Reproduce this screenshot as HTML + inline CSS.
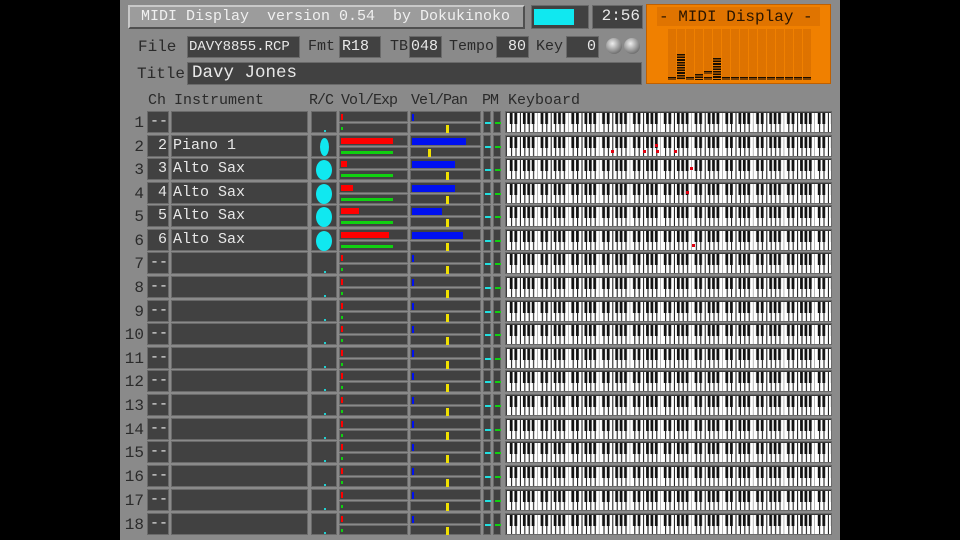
<!DOCTYPE html>
<html><head><meta charset="utf-8"><style>
*{margin:0;padding:0;box-sizing:border-box}
body{width:960px;height:540px;background:#000;position:relative;overflow:hidden;font-family:"Liberation Mono",monospace;font-size:15px}
#m{position:absolute;left:120px;top:0;width:720px;height:540px;background:#8a8a8a}
.a{position:absolute}
.b{position:absolute;background:#414141;border:1px solid #6a6a6a;color:#e8e8e8;line-height:20px;white-space:pre}
.l{position:absolute;color:#2a2a2a;white-space:pre;line-height:20px}
.row{position:absolute;left:0;width:960px;height:23px}
.n{position:absolute;left:120px;width:24px;text-align:right;color:#2a2a2a;font-size:16px;line-height:24px}
.c{left:147px;width:22px;height:22px;padding-left:2px}
.i{left:171px;width:137px;height:22px;padding-left:1px}
.r{left:311px;width:26px;height:22px}
.v{left:339px;width:69px;height:11px}
.v2{left:339px;top:12px;width:69px;height:10px}
.e{left:410px;width:71px;height:11px}
.e2{left:410px;top:12px;width:71px;height:10px}
.p{left:483px;width:8px;height:22px}
.mm{left:493px;width:8px;height:22px}
.k{position:absolute;top:0;left:505px;width:327px;height:22px;background:#3a3a3a;border:1px solid #6a6a6a;overflow:hidden}
.k svg{position:absolute;left:1px;top:1px}
.red{position:absolute;background:#f00;top:2px;height:6px;left:1px}
.grn{position:absolute;background:#10d010;top:3px;height:3px;left:1px}
.blu{position:absolute;background:#0010f0;top:2px;height:7px;left:1px}
.yel{position:absolute;background:#f0e000;top:1px;height:8px;width:3px}
.pd{position:absolute;left:1px;top:10px;width:6px;height:2px;background:#20e0e0}
.md{position:absolute;left:1px;top:10px;width:6px;height:2px;background:#10d010}
.dot{position:absolute;left:12px;top:18px;width:2px;height:2px;background:#20d0d0}
.ell{position:absolute;left:4px;top:1px;width:16px;height:20px;border-radius:50%;background:#10e8f0}
.dia{position:absolute;left:8px;top:2px;width:9px;height:18px;border-radius:50%;background:#10e8f0}
.nt{position:absolute;width:3px;height:3px;background:#e00010}
.bar{position:absolute;width:8px;background:repeating-linear-gradient(#1a0e00 0 1.6px,transparent 1.6px 2.6px)}
</style></head><body>
<svg width="0" height="0" style="position:absolute"><defs>
<pattern id="kb" x="0" y="0" width="30.8" height="19" patternUnits="userSpaceOnUse">
<rect width="30.8" height="19" fill="#fff"/>
<g fill="#111"><rect x="4.1" y="0" width="1" height="19"/><rect x="8.5" y="0" width="1" height="19"/><rect x="12.9" y="0" width="1" height="19"/><rect x="17.3" y="0" width="1" height="19"/><rect x="21.7" y="0" width="1" height="19"/><rect x="26.1" y="0" width="1" height="19"/><rect x="30.5" y="0" width="1" height="19"/>
<rect x="2.8" width="2.8" height="11"/><rect x="7.4" width="2.8" height="11"/><rect x="15.9" width="2.8" height="11"/><rect x="20.3" width="2.8" height="11"/><rect x="24.7" width="2.8" height="11"/></g>
</pattern></defs></svg>
<div id="m"></div>
<div class="a" style="left:128px;top:5px;width:397px;height:24px;background:#9c9c9c;border:2px solid;border-color:#c8c8c8 #505050 #505050 #c8c8c8"></div>
<div class="l" style="left:141px;top:7px;color:#f0f0f0;font-size:15px">MIDI Display  version 0.54  by Dokukinoko</div>
<div class="a" style="left:531px;top:5px;width:58px;height:24px;background:#414141;border:1px solid #6a6a6a"></div>
<div class="a" style="left:534px;top:9px;width:40px;height:16px;background:#10e8f0"></div>
<div class="b" style="left:592px;top:5px;width:51px;height:24px;text-align:right;padding-right:2px;font-size:16px">2:56</div>
<div class="l" style="left:138px;top:37px;font-size:16px">File</div>
<div class="b" style="left:187px;top:36px;width:113px;height:22px;font-size:14px;padding-left:1px">DAVY8855.RCP</div>
<div class="l" style="left:308px;top:37px">Fmt</div>
<div class="b" style="left:339px;top:36px;width:42px;height:22px;padding-left:2px">R18</div>
<div class="l" style="left:390px;top:37px">TB</div>
<div class="b" style="left:409px;top:36px;width:33px;height:22px;padding-left:1px">048</div>
<div class="l" style="left:449px;top:37px">Tempo</div>
<div class="b" style="left:496px;top:36px;width:33px;height:22px;text-align:right;padding-right:2px">80</div>
<div class="l" style="left:536px;top:37px">Key</div>
<div class="b" style="left:566px;top:36px;width:33px;height:22px;text-align:right;padding-right:2px">0</div>
<div class="a" style="left:606px;top:38px;width:16px;height:16px;border-radius:50%;background:radial-gradient(circle at 40% 35%,#eee,#888 60%,#444)"></div>
<div class="a" style="left:624px;top:38px;width:16px;height:16px;border-radius:50%;background:radial-gradient(circle at 40% 35%,#eee,#888 60%,#444)"></div>
<div class="l" style="left:137px;top:64px;font-size:16px">Title</div>
<div class="b" style="left:187px;top:62px;width:455px;height:23px;font-size:17.5px;padding-left:4px">Davy Jones</div>
<div class="a" style="left:646px;top:4px;width:185px;height:80px;background:#f08000;border:1px solid #c06000"></div>
<div class="a" style="left:657px;top:7px;width:163px;height:19px;background:#e07400"></div>
<div class="l" style="left:659px;top:7px;color:#2a1500;font-size:16px">- MIDI Display -</div>
<div class="a" style="left:668px;top:29px;width:144px;height:51px;background:repeating-linear-gradient(90deg,rgba(190,90,0,.35) 0 8px,transparent 8px 9px)"></div>
<div class="bar" style="left:668px;top:77px;height:3px"></div><div class="bar" style="left:677px;top:54px;height:26px"></div><div class="bar" style="left:686px;top:77px;height:3px"></div><div class="bar" style="left:695px;top:74px;height:6px"></div><div class="bar" style="left:704px;top:71px;height:3px"></div><div class="bar" style="left:704px;top:77px;height:3px"></div><div class="bar" style="left:713px;top:58px;height:22px"></div>
<div class="bar" style="left:722px;top:77px;height:3px"></div><div class="bar" style="left:731px;top:77px;height:3px"></div><div class="bar" style="left:740px;top:77px;height:3px"></div><div class="bar" style="left:749px;top:77px;height:3px"></div><div class="bar" style="left:758px;top:77px;height:3px"></div><div class="bar" style="left:767px;top:77px;height:3px"></div><div class="bar" style="left:776px;top:77px;height:3px"></div><div class="bar" style="left:785px;top:77px;height:3px"></div><div class="bar" style="left:794px;top:77px;height:3px"></div><div class="bar" style="left:803px;top:77px;height:3px"></div>
<div class="l" style="left:148px;top:91px">Ch</div>
<div class="l" style="left:174px;top:91px">Instrument</div>
<div class="l" style="left:309px;top:91px;letter-spacing:-1px">R/C</div>
<div class="l" style="left:341px;top:91px;letter-spacing:-1px">Vol/Exp</div>
<div class="l" style="left:411px;top:91px;letter-spacing:-1px">Vel/Pan</div>
<div class="l" style="left:482px;top:91px;letter-spacing:-1px">PM</div>
<div class="l" style="left:508px;top:91px">Keyboard</div>

<div class="row" style="top:111px"><div class="n">1</div><div class="b c">--</div><div class="b i"></div><div class="b r"><div class="dot"></div></div><div class="b v"><div class="red" style="width:2px"></div></div><div class="b v2"><div class="grn" style="width:2px"></div></div><div class="b e"><div class="blu" style="width:2px"></div></div><div class="b e2"><div class="yel" style="left:35px"></div></div><div class="b p"><div class="pd"></div></div><div class="b mm"><div class="md"></div></div><div class="k"><svg width="325" height="19"><rect width="325" height="19" fill="url(#kb)"/></svg></div></div>
<div class="row" style="top:135px"><div class="n">2</div><div class="b c" style="text-align:right;padding-right:1px">2</div><div class="b i">Piano 1</div><div class="b r"><div class="dia"></div></div><div class="b v"><div class="red" style="width:52px"></div></div><div class="b v2"><div class="grn" style="width:52px"></div></div><div class="b e"><div class="blu" style="width:54px"></div></div><div class="b e2"><div class="yel" style="left:17px"></div></div><div class="b p"><div class="pd"></div></div><div class="b mm"><div class="md"></div></div><div class="k"><svg width="325" height="19"><rect width="325" height="19" fill="url(#kb)"/></svg><div class="nt" style="left:105px;top:14px"></div><div class="nt" style="left:137px;top:14px"></div><div class="nt" style="left:150px;top:14px"></div><div class="nt" style="left:149px;top:8px"></div><div class="nt" style="left:168px;top:14px"></div></div></div>
<div class="row" style="top:158px"><div class="n">3</div><div class="b c" style="text-align:right;padding-right:1px">3</div><div class="b i">Alto Sax</div><div class="b r"><div class="ell"></div></div><div class="b v"><div class="red" style="width:6px"></div></div><div class="b v2"><div class="grn" style="width:52px"></div></div><div class="b e"><div class="blu" style="width:43px"></div></div><div class="b e2"><div class="yel" style="left:35px"></div></div><div class="b p"><div class="pd"></div></div><div class="b mm"><div class="md"></div></div><div class="k"><svg width="325" height="19"><rect width="325" height="19" fill="url(#kb)"/></svg><div class="nt" style="left:184px;top:8px"></div></div></div>
<div class="row" style="top:182px"><div class="n">4</div><div class="b c" style="text-align:right;padding-right:1px">4</div><div class="b i">Alto Sax</div><div class="b r"><div class="ell"></div></div><div class="b v"><div class="red" style="width:12px"></div></div><div class="b v2"><div class="grn" style="width:52px"></div></div><div class="b e"><div class="blu" style="width:43px"></div></div><div class="b e2"><div class="yel" style="left:35px"></div></div><div class="b p"><div class="pd"></div></div><div class="b mm"><div class="md"></div></div><div class="k"><svg width="325" height="19"><rect width="325" height="19" fill="url(#kb)"/></svg><div class="nt" style="left:180px;top:8px"></div></div></div>
<div class="row" style="top:205px"><div class="n">5</div><div class="b c" style="text-align:right;padding-right:1px">5</div><div class="b i">Alto Sax</div><div class="b r"><div class="ell"></div></div><div class="b v"><div class="red" style="width:18px"></div></div><div class="b v2"><div class="grn" style="width:52px"></div></div><div class="b e"><div class="blu" style="width:30px"></div></div><div class="b e2"><div class="yel" style="left:35px"></div></div><div class="b p"><div class="pd"></div></div><div class="b mm"><div class="md"></div></div><div class="k"><svg width="325" height="19"><rect width="325" height="19" fill="url(#kb)"/></svg></div></div>
<div class="row" style="top:229px"><div class="n">6</div><div class="b c" style="text-align:right;padding-right:1px">6</div><div class="b i">Alto Sax</div><div class="b r"><div class="ell"></div></div><div class="b v"><div class="red" style="width:48px"></div></div><div class="b v2"><div class="grn" style="width:52px"></div></div><div class="b e"><div class="blu" style="width:51px"></div></div><div class="b e2"><div class="yel" style="left:35px"></div></div><div class="b p"><div class="pd"></div></div><div class="b mm"><div class="md"></div></div><div class="k"><svg width="325" height="19"><rect width="325" height="19" fill="url(#kb)"/></svg><div class="nt" style="left:186px;top:14px"></div></div></div>
<div class="row" style="top:252px"><div class="n">7</div><div class="b c">--</div><div class="b i"></div><div class="b r"><div class="dot"></div></div><div class="b v"><div class="red" style="width:2px"></div></div><div class="b v2"><div class="grn" style="width:2px"></div></div><div class="b e"><div class="blu" style="width:2px"></div></div><div class="b e2"><div class="yel" style="left:35px"></div></div><div class="b p"><div class="pd"></div></div><div class="b mm"><div class="md"></div></div><div class="k"><svg width="325" height="19"><rect width="325" height="19" fill="url(#kb)"/></svg></div></div>
<div class="row" style="top:276px"><div class="n">8</div><div class="b c">--</div><div class="b i"></div><div class="b r"><div class="dot"></div></div><div class="b v"><div class="red" style="width:2px"></div></div><div class="b v2"><div class="grn" style="width:2px"></div></div><div class="b e"><div class="blu" style="width:2px"></div></div><div class="b e2"><div class="yel" style="left:35px"></div></div><div class="b p"><div class="pd"></div></div><div class="b mm"><div class="md"></div></div><div class="k"><svg width="325" height="19"><rect width="325" height="19" fill="url(#kb)"/></svg></div></div>
<div class="row" style="top:300px"><div class="n">9</div><div class="b c">--</div><div class="b i"></div><div class="b r"><div class="dot"></div></div><div class="b v"><div class="red" style="width:2px"></div></div><div class="b v2"><div class="grn" style="width:2px"></div></div><div class="b e"><div class="blu" style="width:2px"></div></div><div class="b e2"><div class="yel" style="left:35px"></div></div><div class="b p"><div class="pd"></div></div><div class="b mm"><div class="md"></div></div><div class="k"><svg width="325" height="19"><rect width="325" height="19" fill="url(#kb)"/></svg></div></div>
<div class="row" style="top:323px"><div class="n">10</div><div class="b c">--</div><div class="b i"></div><div class="b r"><div class="dot"></div></div><div class="b v"><div class="red" style="width:2px"></div></div><div class="b v2"><div class="grn" style="width:2px"></div></div><div class="b e"><div class="blu" style="width:2px"></div></div><div class="b e2"><div class="yel" style="left:35px"></div></div><div class="b p"><div class="pd"></div></div><div class="b mm"><div class="md"></div></div><div class="k"><svg width="325" height="19"><rect width="325" height="19" fill="url(#kb)"/></svg></div></div>
<div class="row" style="top:347px"><div class="n">11</div><div class="b c">--</div><div class="b i"></div><div class="b r"><div class="dot"></div></div><div class="b v"><div class="red" style="width:2px"></div></div><div class="b v2"><div class="grn" style="width:2px"></div></div><div class="b e"><div class="blu" style="width:2px"></div></div><div class="b e2"><div class="yel" style="left:35px"></div></div><div class="b p"><div class="pd"></div></div><div class="b mm"><div class="md"></div></div><div class="k"><svg width="325" height="19"><rect width="325" height="19" fill="url(#kb)"/></svg></div></div>
<div class="row" style="top:370px"><div class="n">12</div><div class="b c">--</div><div class="b i"></div><div class="b r"><div class="dot"></div></div><div class="b v"><div class="red" style="width:2px"></div></div><div class="b v2"><div class="grn" style="width:2px"></div></div><div class="b e"><div class="blu" style="width:2px"></div></div><div class="b e2"><div class="yel" style="left:35px"></div></div><div class="b p"><div class="pd"></div></div><div class="b mm"><div class="md"></div></div><div class="k"><svg width="325" height="19"><rect width="325" height="19" fill="url(#kb)"/></svg></div></div>
<div class="row" style="top:394px"><div class="n">13</div><div class="b c">--</div><div class="b i"></div><div class="b r"><div class="dot"></div></div><div class="b v"><div class="red" style="width:2px"></div></div><div class="b v2"><div class="grn" style="width:2px"></div></div><div class="b e"><div class="blu" style="width:2px"></div></div><div class="b e2"><div class="yel" style="left:35px"></div></div><div class="b p"><div class="pd"></div></div><div class="b mm"><div class="md"></div></div><div class="k"><svg width="325" height="19"><rect width="325" height="19" fill="url(#kb)"/></svg></div></div>
<div class="row" style="top:418px"><div class="n">14</div><div class="b c">--</div><div class="b i"></div><div class="b r"><div class="dot"></div></div><div class="b v"><div class="red" style="width:2px"></div></div><div class="b v2"><div class="grn" style="width:2px"></div></div><div class="b e"><div class="blu" style="width:2px"></div></div><div class="b e2"><div class="yel" style="left:35px"></div></div><div class="b p"><div class="pd"></div></div><div class="b mm"><div class="md"></div></div><div class="k"><svg width="325" height="19"><rect width="325" height="19" fill="url(#kb)"/></svg></div></div>
<div class="row" style="top:441px"><div class="n">15</div><div class="b c">--</div><div class="b i"></div><div class="b r"><div class="dot"></div></div><div class="b v"><div class="red" style="width:2px"></div></div><div class="b v2"><div class="grn" style="width:2px"></div></div><div class="b e"><div class="blu" style="width:2px"></div></div><div class="b e2"><div class="yel" style="left:35px"></div></div><div class="b p"><div class="pd"></div></div><div class="b mm"><div class="md"></div></div><div class="k"><svg width="325" height="19"><rect width="325" height="19" fill="url(#kb)"/></svg></div></div>
<div class="row" style="top:465px"><div class="n">16</div><div class="b c">--</div><div class="b i"></div><div class="b r"><div class="dot"></div></div><div class="b v"><div class="red" style="width:2px"></div></div><div class="b v2"><div class="grn" style="width:2px"></div></div><div class="b e"><div class="blu" style="width:2px"></div></div><div class="b e2"><div class="yel" style="left:35px"></div></div><div class="b p"><div class="pd"></div></div><div class="b mm"><div class="md"></div></div><div class="k"><svg width="325" height="19"><rect width="325" height="19" fill="url(#kb)"/></svg></div></div>
<div class="row" style="top:489px"><div class="n">17</div><div class="b c">--</div><div class="b i"></div><div class="b r"><div class="dot"></div></div><div class="b v"><div class="red" style="width:2px"></div></div><div class="b v2"><div class="grn" style="width:2px"></div></div><div class="b e"><div class="blu" style="width:2px"></div></div><div class="b e2"><div class="yel" style="left:35px"></div></div><div class="b p"><div class="pd"></div></div><div class="b mm"><div class="md"></div></div><div class="k"><svg width="325" height="19"><rect width="325" height="19" fill="url(#kb)"/></svg></div></div>
<div class="row" style="top:513px"><div class="n">18</div><div class="b c">--</div><div class="b i"></div><div class="b r"><div class="dot"></div></div><div class="b v"><div class="red" style="width:2px"></div></div><div class="b v2"><div class="grn" style="width:2px"></div></div><div class="b e"><div class="blu" style="width:2px"></div></div><div class="b e2"><div class="yel" style="left:35px"></div></div><div class="b p"><div class="pd"></div></div><div class="b mm"><div class="md"></div></div><div class="k"><svg width="325" height="19"><rect width="325" height="19" fill="url(#kb)"/></svg></div></div>
</body></html>
